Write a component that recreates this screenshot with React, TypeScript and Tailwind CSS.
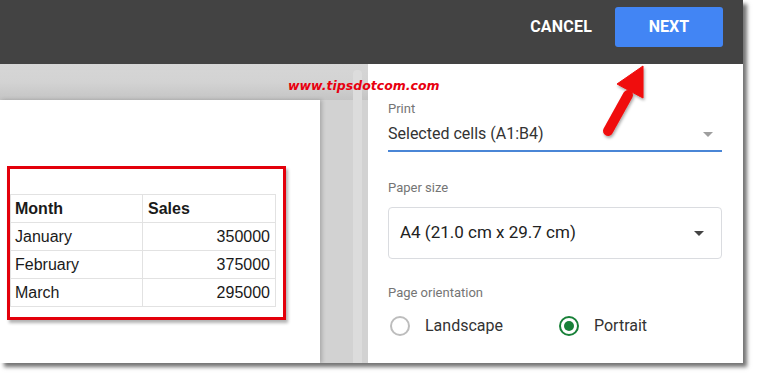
import React from "react";

const rows = [
  { month: "January", sales: "350000" },
  { month: "February", sales: "375000" },
  { month: "March", sales: "295000" },
];

const Radio = ({ checked, label }: { checked: boolean; label: string }) => (
  <div className="flex items-center">
    <span
      className={
        checked
          ? "flex h-[20px] w-[20px] items-center justify-center rounded-full border-2 border-[#188038]"
          : "flex h-[20px] w-[20px] items-center justify-center rounded-full border-2 border-[#bdbdbd]"
      }
    >
      {checked && <span className="h-[10px] w-[10px] rounded-full bg-[#188038]" />}
    </span>
    <span className="ml-[15px] text-[16px] text-[#333]">{label}</span>
  </div>
);

const App = () => {
  return (
    <div className="relative h-[378px] w-[758px] bg-white font-['Roboto',sans-serif]">
      <div className="flex h-[363px] w-[743px] flex-col overflow-hidden shadow-[4px_4px_4px_rgba(0,0,0,0.55)]">
        {/* top bar */}
        <div className="flex h-[64px] shrink-0 items-start justify-end bg-[#434343] pr-[20px] pt-[7px]">
          <button className="mt-[6px] h-[28px] text-[16px] font-bold tracking-[0.2px] text-white">
            CANCEL
          </button>
          <button className="ml-[23px] h-[40px] w-[108px] rounded-[3px] bg-[#4285f4] text-[16px] font-bold text-white">
            NEXT
          </button>
        </div>

        <div className="flex flex-1">
          {/* preview area */}
          <div className="flex w-[368px] flex-col bg-[#d2d2d2]">
            <div className="h-[36px] shrink-0 bg-gradient-to-b from-[#d6d6d6] via-[#d3d3d3] to-[#c4c4c4]" />
            <div className="flex flex-1">
              <div className="w-[320px] bg-white pl-[7px] pt-[66px] shadow-[2px_0_4px_rgba(0,0,0,0.2)]">
                <div className="h-[154px] w-[279px] border-[3px] border-[#e3000b] pt-[25px] shadow-[2px_3px_3px_rgba(0,0,0,0.3)]">
                  <table className="w-[266px] border-collapse font-['Liberation_Sans',Arial,sans-serif] text-[16px] text-[#1a1a1a]">
                    <tbody>
                      <tr className="h-[28px]">
                        <td className="w-[132px] border border-[#e2e2e2] pl-[4px] font-bold">Month</td>
                        <td className="border border-[#e2e2e2] pl-[5px] font-bold">Sales</td>
                      </tr>
                      {rows.map((r) => (
                        <tr key={r.month} className="h-[28px]">
                          <td className="border border-[#e2e2e2] pl-[4px]">{r.month}</td>
                          <td className="border border-[#e2e2e2] pr-[5px] text-right">{r.sales}</td>
                        </tr>
                      ))}
                    </tbody>
                  </table>
                </div>
              </div>
              <div className="ml-[33px] mt-[-30px] w-[9px] rounded-t-[4px] bg-[#dcdcdc]" />
            </div>
          </div>

          {/* settings panel */}
          <div className="w-[375px] bg-white pl-[20px] pr-[21px] pt-[37px]">
            <div className="text-[13px] leading-[16px] text-[#757575]">Print</div>
            <div className="mt-[1px] flex h-[34px] items-center justify-between border-b-2 border-[#4a86d6]">
              <span className="text-[16px] text-[#333]">Selected cells (A1:B4)</span>
              <span className="mr-[9px] h-0 w-0 border-x-[5px] border-t-[5px] border-x-transparent border-t-[#9e9e9e]" />
            </div>
            <div className="mt-[28px] text-[13px] leading-[16px] text-[#757575]">Paper size</div>
            <div className="mt-[11px] flex h-[52px] items-center justify-between rounded-[4px] border border-[#dadce0] pl-[11px] pr-[17px]">
              <span className="text-[17px] text-[#222]">A4 (21.0 cm x 29.7 cm)</span>
              <span className="h-0 w-0 border-x-[5px] border-t-[5px] border-x-transparent border-t-[#444]" />
            </div>
            <div className="mt-[26px] text-[13px] leading-[16px] text-[#757575]">Page orientation</div>
            <div className="mt-[13px] flex items-center pl-[2px]">
              <Radio checked={false} label="Landscape" />
              <div className="ml-[56px]">
                <Radio checked={true} label="Portrait" />
              </div>
            </div>
          </div>
        </div>
      </div>

      {/* watermark */}
      <div className="absolute left-[288px] top-[77px] font-['DejaVu_Sans',sans-serif] text-[12.5px] font-bold italic text-[#e8000f]">
        www.tipsdotcom.com
      </div>

      {/* arrow */}
      <svg className="absolute left-[595px] top-[58px]" width="60" height="85" viewBox="595 58 60 85">
        <defs>
          <filter id="sh" x="-30%" y="-30%" width="160%" height="160%">
            <feDropShadow dx="1" dy="2" stdDeviation="1.5" floodColor="#000" floodOpacity="0.35" />
          </filter>
        </defs>
        <g filter="url(#sh)" fill="#f00a0a" stroke="#f00a0a">
          <line x1="608" y1="131" x2="628" y2="95" strokeWidth="10" strokeLinecap="round" />
          <polygon points="643,66 617,84 643,98" strokeWidth="1" strokeLinejoin="round" />
        </g>
      </svg>
    </div>
  );
};

export default App;
